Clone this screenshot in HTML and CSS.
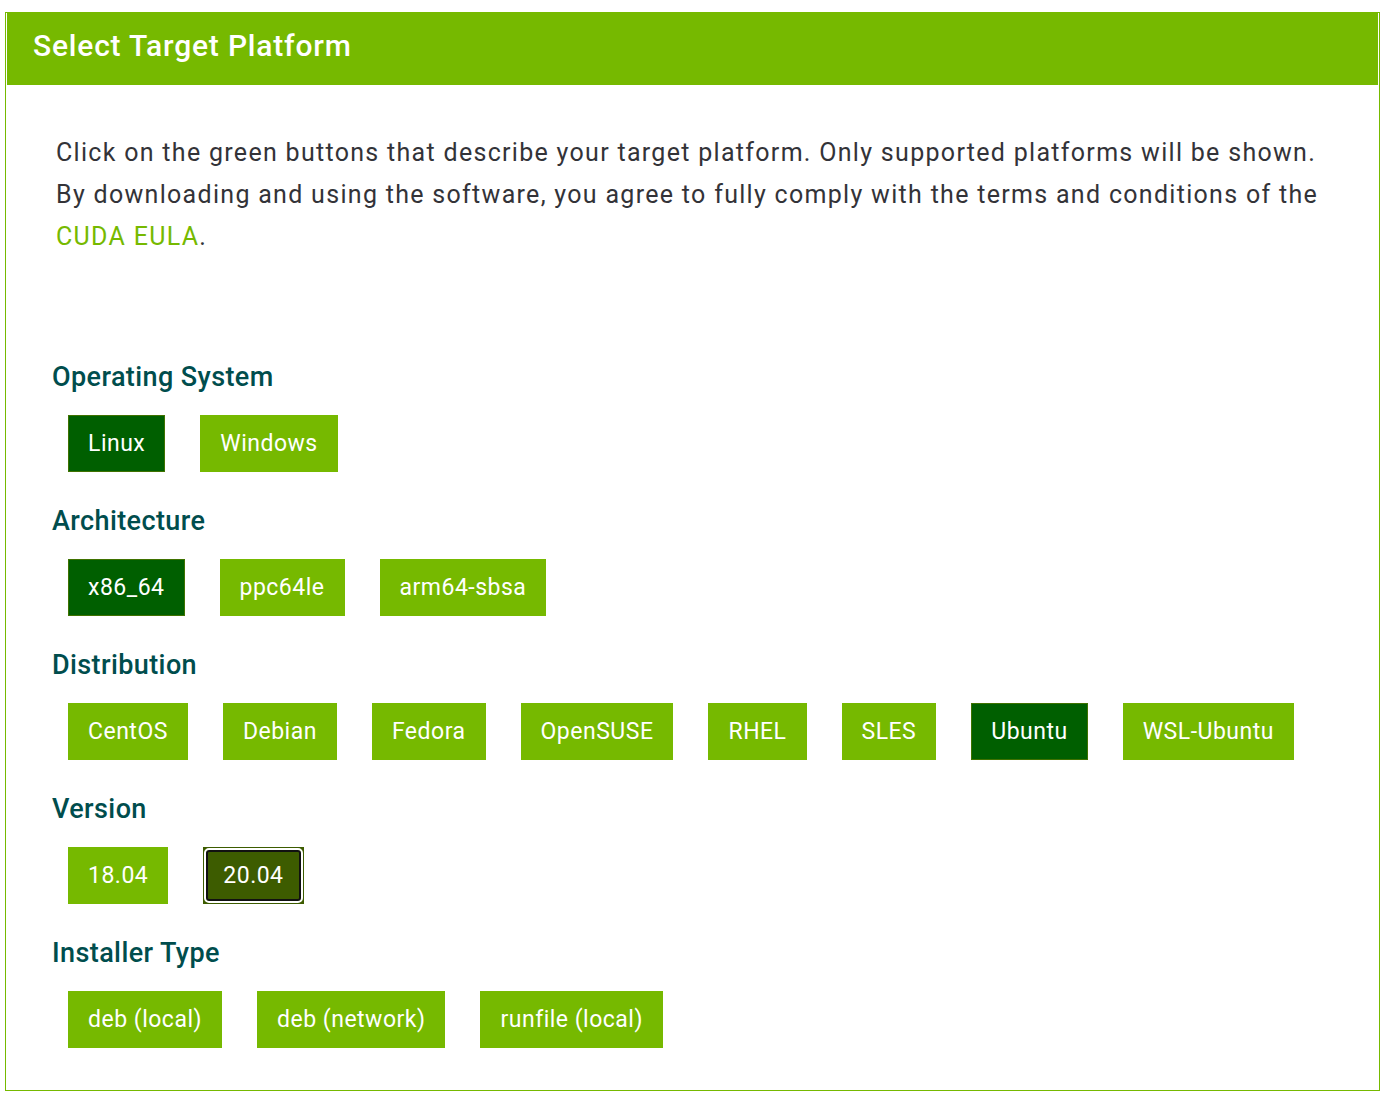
FILE: index.html
```html
<!DOCTYPE html>
<html lang="en">
<head>
<meta charset="utf-8">
<title>Select Target Platform</title>
<link rel="stylesheet" href="styles.css">
</head>
<body>
<div class="panel">
  <div class="panel-header">Select Target Platform</div>
  <div class="panel-body">
    <p class="intro">Click on the green buttons that describe your target platform. Only supported platforms will be shown. By downloading and using the software, you agree to fully comply with the terms and conditions of the <a class="link" href="#">CUDA EULA</a>.</p>

    <div class="group">
      <h3 class="group-title">Operating System</h3>
      <div class="options">
        <button class="opt selected">Linux</button>
        <button class="opt">Windows</button>
      </div>
    </div>

    <div class="group">
      <h3 class="group-title">Architecture</h3>
      <div class="options">
        <button class="opt selected">x86_64</button>
        <button class="opt">ppc64le</button>
        <button class="opt">arm64-sbsa</button>
      </div>
    </div>

    <div class="group">
      <h3 class="group-title">Distribution</h3>
      <div class="options">
        <button class="opt">CentOS</button>
        <button class="opt">Debian</button>
        <button class="opt">Fedora</button>
        <button class="opt">OpenSUSE</button>
        <button class="opt">RHEL</button>
        <button class="opt">SLES</button>
        <button class="opt selected">Ubuntu</button>
        <button class="opt">WSL-Ubuntu</button>
      </div>
    </div>

    <div class="group">
      <h3 class="group-title">Version</h3>
      <div class="options">
        <button class="opt">18.04</button>
        <button class="opt focused">20.04</button>
      </div>
    </div>

    <div class="group">
      <h3 class="group-title">Installer Type</h3>
      <div class="options">
        <button class="opt">deb (local)</button>
        <button class="opt">deb (network)</button>
        <button class="opt">runfile (local)</button>
      </div>
    </div>
  </div>
</div>
</body>
</html>
```

FILE: styles.css
```css
html, body {
  margin: 0;
  padding: 0;
  background: #ffffff;
}

body {
  font-family: Roboto, "Liberation Sans", sans-serif;
}

.panel {
  margin: 12px 0 0 5px;
  width: 1375px;
  height: 1079px;
  box-sizing: border-box;
  border: 1px solid #76b900;
  padding: 1px;
}

.panel-header {
  background: #76b900;
  color: #ffffff;
  height: 72px;
  box-sizing: border-box;
  display: flex;
  align-items: center;
  padding: 0 0 7px 26px;
  font-size: 30px;
  letter-spacing: 0.8px;
  font-weight: 500;
  margin-top: -1px;
}

.panel-body {
  padding: 47px 0 0 45px;
}

.intro {
  margin: 0 0 102px 4px;
  font-size: 25px;
  letter-spacing: 1.3px;
  line-height: 42px;
  color: #333338;
  width: 1285px;
}

.link {
  color: #76b900;
  text-decoration: none;
}

.group {
  height: 144px;
}

.group-title {
  margin: 0;
  font-size: 27px;
  letter-spacing: 0.4px;
  line-height: 34px;
  font-weight: 500;
  color: #004d4d;
}

.options {
  display: flex;
  gap: 35px;
  margin: 21px 0 0 16px;
}

.opt {
  position: relative;
  height: 57px;
  padding: 0 19px;
  border: 1px solid #76b900;
  background: #76b900;
  color: #ffffff;
  font-family: Roboto, "Liberation Sans", sans-serif;
  font-size: 23px;
  letter-spacing: 0.5px;
  font-weight: 400;
  cursor: pointer;
}

.opt.selected {
  background: #005f00;
  border-color: #3f7200;
}

.opt.focused {
  background: #3d5c00;
  border-color: #3d5c00;
}

.opt.focused::after {
  content: "";
  position: absolute;
  inset: 0;
  border: 2px solid #ffffff;
  border-radius: 5px;
  box-shadow: inset 0 0 0 2px #111111;
}
```
